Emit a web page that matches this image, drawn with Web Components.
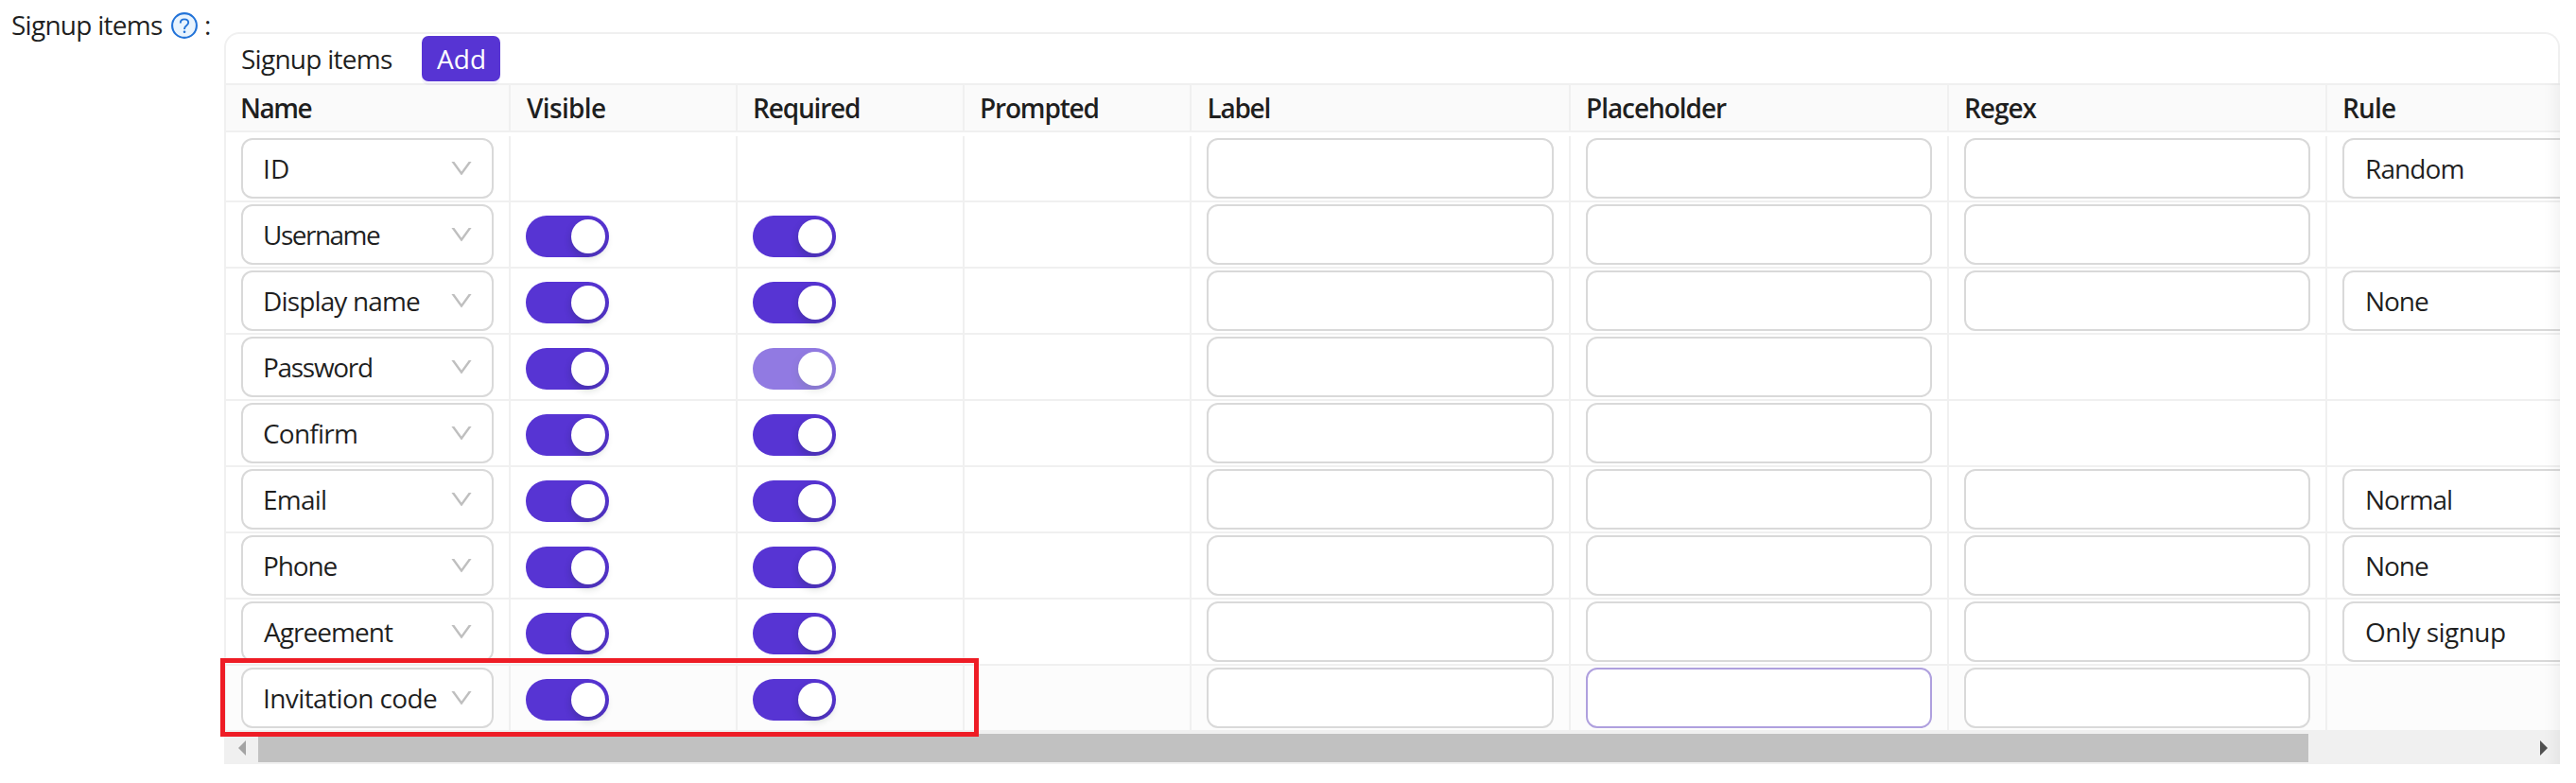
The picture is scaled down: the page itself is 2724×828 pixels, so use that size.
<!DOCTYPE html>
<html lang="en">
<head>
<meta charset="utf-8">
<title>Signup items</title>
<style>
html,body{margin:0;background:#fff}
body{width:2724px;height:828px;overflow:hidden;font:28px/44px "Open Sans","Noto Sans",sans-serif;color:rgba(0,0,0,.88)}
</style>
</head>
<body>
<signup-page></signup-page>
<script>
const ctx = document.createElement('canvas').getContext('2d');
class Base extends HTMLElement {
  constructor(){ super(); this.attachShadow({mode:'open'}); }
  connectedCallback(){ this.shadowRoot.innerHTML = this.render(); }
}
/* Text tracked so that its visible glyphs span exactly `span` pixels */
class UiText extends Base {
  render(){
    const t = this.getAttribute('text'), w = +this.getAttribute('span'), wt = this.getAttribute('weight') || 400;
    ctx.font = `${wt} 28px "Open Sans"`;
    const m = ctx.measureText(t);
    const ink = m.actualBoundingBoxRight + m.actualBoundingBoxLeft;
    const ls = t.length > 1 ? (w - ink) / (t.length - 1) : 0;
    const round = /^[ACO]/.test(t) && wt == 400 && t != 'Add' ? 1 : 0;
    return `<style>:host{display:block;white-space:nowrap;line-height:44px;font-weight:${wt};letter-spacing:${ls.toFixed(3)}px;margin-left:${(m.actualBoundingBoxLeft - round).toFixed(2)}px;font-variant-ligatures:none}</style>${t}`;
  }
}
class UiHelp extends Base {
  render(){ return `<style>:host{display:block;width:28px;height:28px}svg{display:block}</style>
  <svg width="28" height="28" viewBox="0 0 28 28"><circle cx="14" cy="14" r="12.9" fill="#e9f4fe" stroke="#2273d8" stroke-width="2.1"/><path d="M9.8 11.4C9.8 8.9 11.6 7.4 14 7.4s4.2 1.5 4.2 3.7c0 2.9-4.1 3-4.1 6.2v.7" fill="none" stroke="#2273d8" stroke-width="1.9"/><rect x="12.8" y="19.4" width="2.5" height="2.5" rx=".8" fill="#2273d8"/></svg>`; }
}
class UiButton extends Base {
  render(){ return `<style>:host{box-sizing:border-box;display:flex;align-items:center;width:83px;height:48px;padding-left:16px;border-radius:7px;background:#5734d3;color:#fff;box-shadow:0 4px 0 rgba(87,52,211,.06)}</style><slot></slot>`; }
}
class UiSwitch extends Base {
  render(){ return `<style>:host{box-sizing:border-box;display:flex;justify-content:flex-end;width:88px;height:44px;padding:4px;border-radius:22px;background:#5734d3}:host([disabled]){opacity:.65}
  i{width:36px;height:36px;border-radius:50%;background:#fff;box-shadow:0 4px 8px rgba(0,35,11,.2)}</style><i></i>`; }
}
class UiInput extends Base {
  render(){ return `<style>:host{box-sizing:border-box;display:block;height:64px;border:2px solid #d9d9d9;border-radius:12px;background:#fff}:host([active]){border-color:#afa0de}</style>`; }
}
class UiSelect extends Base {
  render(){ return `<style>:host{box-sizing:border-box;display:flex;align-items:center;justify-content:space-between;height:64px;border:2px solid #d9d9d9;border-radius:12px;background:#fff;padding:0 21px 0 23px}:host([rule]){padding-left:24px}svg{flex:none}</style>
  <slot></slot><svg width="22" height="16" viewBox="0 0 22 16" style="margin-top:-1px"><path d="M.4 1h3L11 11.6 18.6 1h3L11.8 14.6a1 1 0 0 1-1.6 0z" fill="#bfbfbf"/></svg>`; }
}
class SignupRow extends Base {
  render(){ return `<style>
  :host{display:grid;grid-template-columns:301px 240px 240px 240px 401px 400px 400px 440px;height:70px}
  ::slotted(*){box-sizing:border-box;border-right:2px solid #f0f0f0;border-bottom:2px solid #f0f0f0;display:flex;align-items:center;padding:0 16px}
  :host([head]){height:50px;background:#fafafa;font-weight:600}
  :host([hover]){background:#fcfcfc}
  </style><slot></slot>`; }
}
class SignupScrollbar extends Base {
  render(){ return `<style>:host{box-sizing:border-box;display:flex;align-items:center;height:34px;padding:0 13px;background:#f0f0f0}
  b{width:2168px;height:30px;background:#c1c1c1;margin-left:13px}svg{display:block}.r{margin-left:auto}</style>
  <svg width="8" height="16"><path d="M8 0v16L0 8z" fill="#a3a3a3"/></svg><b></b><svg class="r" width="8" height="16"><path d="M0 0v16l8-8z" fill="#505050"/></svg>`; }
}
class SignupTable extends Base {
  render(){
    const T=(t,s,w=400)=>`<ui-text text="${t}" span="${s}" weight="${w}"></ui-text>`;
    // title, text span, optical inset
    const heads=[['Name',73.5,1],['Visible',83,1],['Required',111,2],['Prompted',123.5,2],['Label',64,2.5],['Placeholder',147,2],['Regex',75.5,2],['Rule',54,2]];
    // name, text span, switches (0 none, 1 on, 2 required locked), inputs, rule, rule span
    const rows=[['ID',25,0,3,'Random',101.5],['Username',122,1,3],['Display name',164,1,3,'None',65],['Password',113,2,2],['Confirm',98,1,2],['Email',64,1,3,'Normal',89],['Phone',76.5,1,3,'None',65],['Agreement',137,1,3,'Only signup',147],['Invitation code',182,1,3]];
    const row=([n,s,sw,inp,rule,rs],i)=>`<signup-row ${i==8?'hover':''}>
      <span><ui-select>${T(n,s)}</ui-select></span>
      <span>${sw?'<ui-switch></ui-switch>':''}</span>
      <span>${sw?`<ui-switch ${sw==2?'disabled':''}></ui-switch>`:''}</span><span></span>
      ${[0,1,2].map(k=>`<span>${k<inp?`<ui-input ${i==8&&k==1?'active':''}></ui-input>`:''}</span>`).join('')}
      <span>${rule?`<ui-select rule>${T(rule,rs)}</ui-select>`:''}</span></signup-row>`;
    return `<style>
    :host{display:block;position:relative;width:2470px;height:774px}
    .title{box-sizing:border-box;height:54px;border:2px solid #f0f0f0;border-bottom:0;border-radius:16px 16px 0 0;display:flex;align-items:center;padding:0 17px}
    .title .cap{width:190px}
    .clip{overflow:hidden;border-left:2px solid #f0f0f0;border-top:2px solid #f0f0f0;height:686px;box-sizing:border-box}
    signup-row{width:2662px}
    ui-select,ui-input{flex:1;min-width:0}
    ui-switch{margin-top:4px}
    .gap{height:4px}
    .shade{position:absolute;right:0;top:54px;width:60px;bottom:0;box-shadow:inset -20px 0 16px -16px rgba(5,5,5,.06)}
    signup-scrollbar{border-left:2px solid #f0f0f0}
    </style>
    <div class="title"><div class="cap">${T('Signup items',159)}</div><ui-button>${T('Add',50)}</ui-button></div>
    <div class="clip"><signup-row head>${heads.map(h=>`<span style="padding-left:${16+h[2]}px">${T(h[0],h[1],600)}</span>`).join('')}</signup-row><div class="gap"></div>
    ${rows.map(row).join('')}</div>
    <signup-scrollbar></signup-scrollbar><div class="shade"></div>`;
  }
}
class SignupPage extends Base {
  render(){ return `<style>
  :host{display:flex;position:relative;box-sizing:border-box;width:2724px;height:828px;align-items:flex-start}
  .label{display:flex;align-items:center;width:237px;box-sizing:border-box;padding:4px 0 0 13px}
  .t{width:168px}ui-help{margin-top:2px}.c{margin-left:9px}
  signup-table{margin-top:34px}
  .mark{position:absolute;box-sizing:border-box;left:233px;top:696px;width:802px;height:83px;border:5px solid #ee1c25}
  </style><div class="label"><div class="t"><ui-text text="Signup items" span="159"></ui-text></div><ui-help></ui-help><div class="c"><ui-text text=":" span="4"></ui-text></div></div>
  <signup-table></signup-table><div class="mark"></div>`; }
}
for (const [n,c] of Object.entries({'ui-text':UiText,'ui-help':UiHelp,'ui-button':UiButton,'ui-switch':UiSwitch,'ui-input':UiInput,'ui-select':UiSelect,'signup-row':SignupRow,'signup-scrollbar':SignupScrollbar,'signup-table':SignupTable,'signup-page':SignupPage})) customElements.define(n,c);
</script>
</body>
</html>
